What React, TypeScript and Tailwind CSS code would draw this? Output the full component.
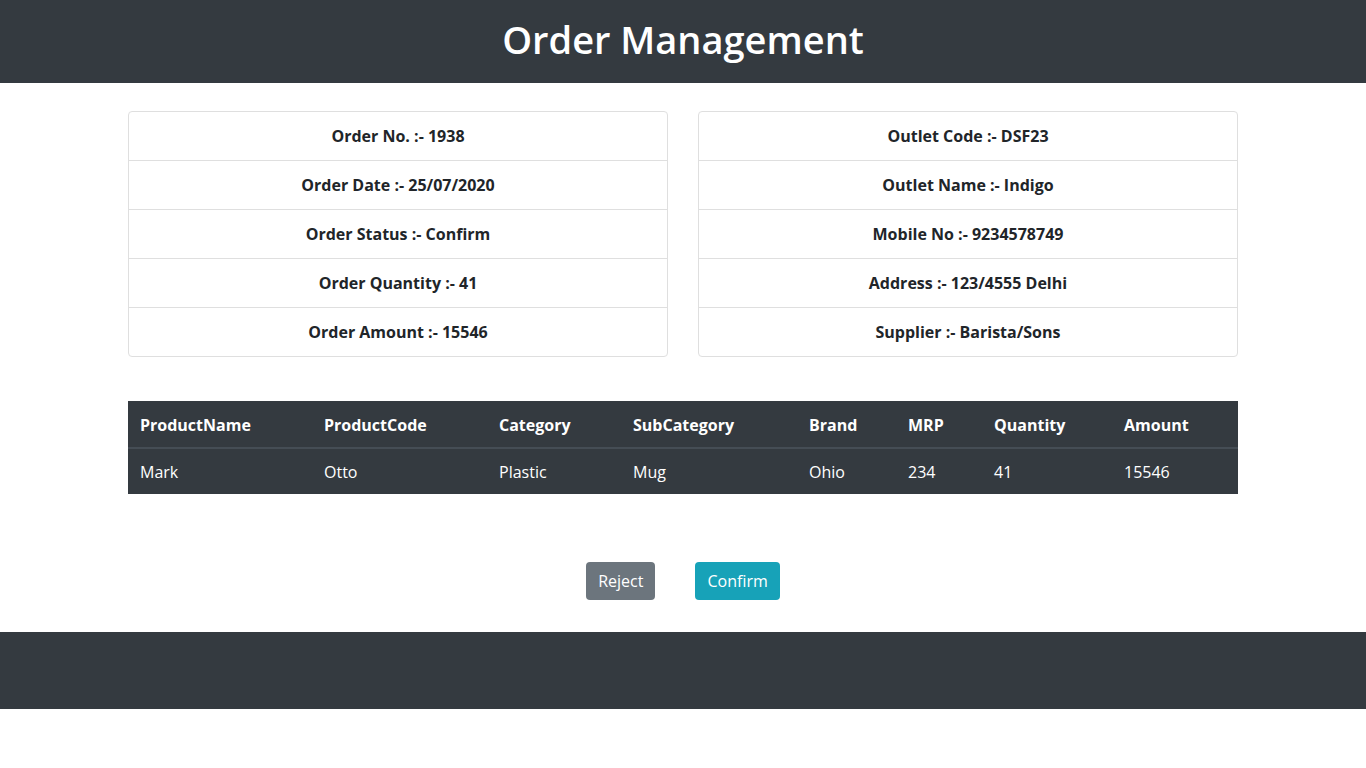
import React from "react";

const orderInfo = [
  "Order No. :- 1938",
  "Order Date :- 25/07/2020",
  "Order Status :- Confirm",
  "Order Quantity :- 41",
  "Order Amount :- 15546",
];

const outletInfo = [
  "Outlet Code :- DSF23",
  "Outlet Name :- Indigo",
  "Mobile No :- 9234578749",
  "Address :- 123/4555 Delhi",
  "Supplier :- Barista/Sons",
];

const columns = [
  { label: "ProductName", w: "w-[184px]" },
  { label: "ProductCode", w: "w-[175px]" },
  { label: "Category", w: "w-[134px]" },
  { label: "SubCategory", w: "w-[176px]" },
  { label: "Brand", w: "w-[99px]" },
  { label: "MRP", w: "w-[86px]" },
  { label: "Quantity", w: "w-[130px]" },
  { label: "Amount", w: "w-[126px]" },
];

const row = ["Mark", "Otto", "Plastic", "Mug", "Ohio", "234", "41", "15546"];

const InfoCard = ({ items }: { items: string[] }) => (
  <ul className="w-[540px] rounded-[4px] border border-[#dfdfdf] bg-white">
    {items.map((t, i) => (
      <li
        key={t}
        className={`px-5 py-3 text-center text-base font-bold leading-6 text-[#212529] ${
          i > 0 ? "border-t border-[#dfdfdf]" : ""
        }`}
      >
        {t}
      </li>
    ))}
  </ul>
);

export default function App() {
  return (
    <div className="min-h-[768px] bg-white font-['Open_Sans',sans-serif] text-[#212529]">
      {/* Header */}
      <header className="flex h-[83px] items-center justify-center bg-[#343a40] pb-[5px]">
        <h1 className="text-[38px] font-semibold leading-[46px] text-white">Order Management</h1>
      </header>

      <main className="mx-auto w-[1110px] pt-[28px]">
        {/* Order + outlet details */}
        <div className="flex justify-between">
          <InfoCard items={orderInfo} />
          <InfoCard items={outletInfo} />
        </div>

        {/* Product table */}
        <table className="mt-[44px] w-full table-fixed border-collapse bg-[#343a40] text-white">
          <thead>
            <tr className="border-b-2 border-[#454d55]">
              {columns.map((c) => (
                <th key={c.label} className={`${c.w} px-3 pt-[12px] pb-[10px] text-left text-base font-bold leading-6`}>
                  {c.label}
                </th>
              ))}
            </tr>
          </thead>
          <tbody>
            <tr>
              {row.map((v, i) => (
                <td key={i} className="px-3 pt-[11px] pb-[10px] text-base leading-6">
                  {v}
                </td>
              ))}
            </tr>
          </tbody>
        </table>

        {/* Actions */}
        <div className="mt-[68px] flex justify-center gap-10">
          <button className="h-[38px] rounded-[4px] bg-[#6c757d] px-3 text-base text-white">Reject</button>
          <button className="h-[38px] rounded-[4px] bg-[#17a2b8] px-3 text-base text-white">Confirm</button>
        </div>
      </main>

      {/* Footer */}
      <footer className="mt-[32px] h-[77px] bg-[#343a40]" />
    </div>
  );
}
